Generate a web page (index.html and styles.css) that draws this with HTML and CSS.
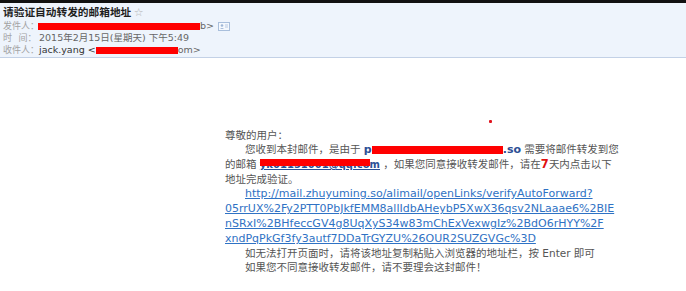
FILE: index.html
```html
<!DOCTYPE html>
<html lang="zh">
<head>
	<meta charset="utf-8">
	<title>请验证自动转发的邮箱地址</title>
	<link rel="stylesheet" href="styles.css">
</head>
<body>
	<div class="topbar"></div>
	<div class="head">
		<div class="subject">请验证自动转发的邮箱地址 <span class="star">☆</span></div>
		<div class="row">
			<span class="label">发件人：</span><span class="redact r-from"></span><span class="val">b&gt;</span>
			<svg class="card-icon" width="12" height="9" viewBox="0 0 12 9">
				<rect x="0.5" y="0.5" width="11" height="8" fill="#f4f8fd" stroke="#a9bfdc"/>
				<circle cx="4" cy="3.5" r="1.3" fill="#9fb6d6"/>
				<path d="M2 7 Q4 4.8 6 7 Z" fill="#9fb6d6"/>
				<path d="M7 3h3M7 5h3" stroke="#b8c9e2"/>
			</svg>
		</div>
		<div class="row">
			<span class="label">时&ensp;&nbsp;间：</span><span class="val">2015年2月15日(星期天) 下午5:49</span>
		</div>
		<div class="row">
			<span class="label">收件人：</span><span class="val name">jack.yang &lt;</span><span class="redact r-to"></span><span class="val">om&gt;</span>
		</div>
	</div>

	<div class="mail">
		<div class="dot"></div>
		<p class="letter">
			尊敬的用户：<br>
			<span class="indent"></span>您收到本封邮件，是由于 <a class="acct">p<span class="redact r-acct"></span>.so</a> 需要将邮件转发到您<br>
			的邮箱 <a class="mailto">yk01151001@qq.com<span class="redact r-mail"></span></a> ，如果您同意接收转发邮件，请在<b class="num">7</b>天内点击以下<br>
			地址完成验证。<br>
			<span class="indent"></span><a class="link">http://mail.zhuyuming.so/alimail/openLinks/verifyAutoForward?<br>05rrUX%2Fy2PTT0PbJkfEMM8allIdbAHeybP5XwX36qsv2NLaaae6%2BIE<br>nSRxI%2BHfeccGV4g8UqXyS34w83mChExVexwgIz%2BdO6rHYY%2F<br>xndPqPkGf3fy3autf7DDaTrGYZU%26OUR2SUZGVGc%3D</a><br>
			<span class="indent"></span>如无法打开页面时，请将该地址复制粘贴入浏览器的地址栏，按 Enter 即可<br>
			<span class="indent"></span>如果您不同意接收转发邮件，请不要理会这封邮件！
		</p>
	</div>
</body>
</html>
```

FILE: styles.css
```css
*{
	margin: 0;
	padding: 0;
}

body{
	font-family: "DejaVu Sans", "Noto Sans CJK SC", sans-serif;
	background: #fff;
	color: #444;
}

.topbar{
	height: 3px;
	background: #111;
}

.head{
	background: #eef4fc;
	border-bottom: 1px solid #c3d1e6;
	padding: 2px 3px 1px;
}

.subject{
	font-family: "Noto Sans CJK SC", sans-serif;
	font-weight: 700;
	font-size: 10.7px;
	line-height: 13px;
	color: #1e1e1e;
	margin-bottom: 1px;
}

.star{
	font-family: "DejaVu Sans", sans-serif;
	font-weight: 400;
	font-size: 11px;
	color: #b5b5b5;
}

.row{
	display: flex;
	align-items: center;
	font-family: "DejaVu Sans", "Noto Sans CJK SC", sans-serif;
	font-size: 9.5px;
	line-height: 12px;
	height: 12px;
	white-space: nowrap;
}

.label{
	flex: none;
	width: 36px;
	font-family: "Noto Sans CJK SC", sans-serif;
	font-size: 9px;
	color: #a3a3a3;
}

.val{
	color: #666;
}

.name{
	color: #333;
	white-space: pre;
}

.redact{
	display: inline-block;
	background: #f00;
	height: 7px;
}

.r-from{
	width: 162px;
	margin-left: -1px;
}

.r-to{
	width: 82px;
}

.card-icon{
	margin-left: 4px;
}

.mail{
	padding: 62px 0 0 225px;
}

.dot{
	width: 3px;
	height: 3px;
	background: #e0141e;
	border-radius: 1px;
	margin-left: 264px;
	margin-bottom: 5px;
}

.letter{
	font-size: 10.5px;
	line-height: 14px;
	color: #555;
	white-space: nowrap;
}

.indent{
	display: inline-block;
	width: 20px;
}

.acct{
	color: #2b4f95;
	font-weight: 700;
	font-size: 11px;
}

.r-acct{
	width: 131px;
	height: 8px;
	vertical-align: -1px;
}

.mailto{
	position: relative;
	color: #2b4f95;
	font-weight: 700;
	font-size: 10px;
	text-decoration: underline;
}

.r-mail{
	position: absolute;
	left: 0;
	top: 0;
	width: 110px;
	height: 7px;
}

.num{
	color: #e01010;
	font-size: 11.5px;
}

.link{
	color: #2f72c4;
	text-decoration: underline;
	font-size: 11px;
}
```
